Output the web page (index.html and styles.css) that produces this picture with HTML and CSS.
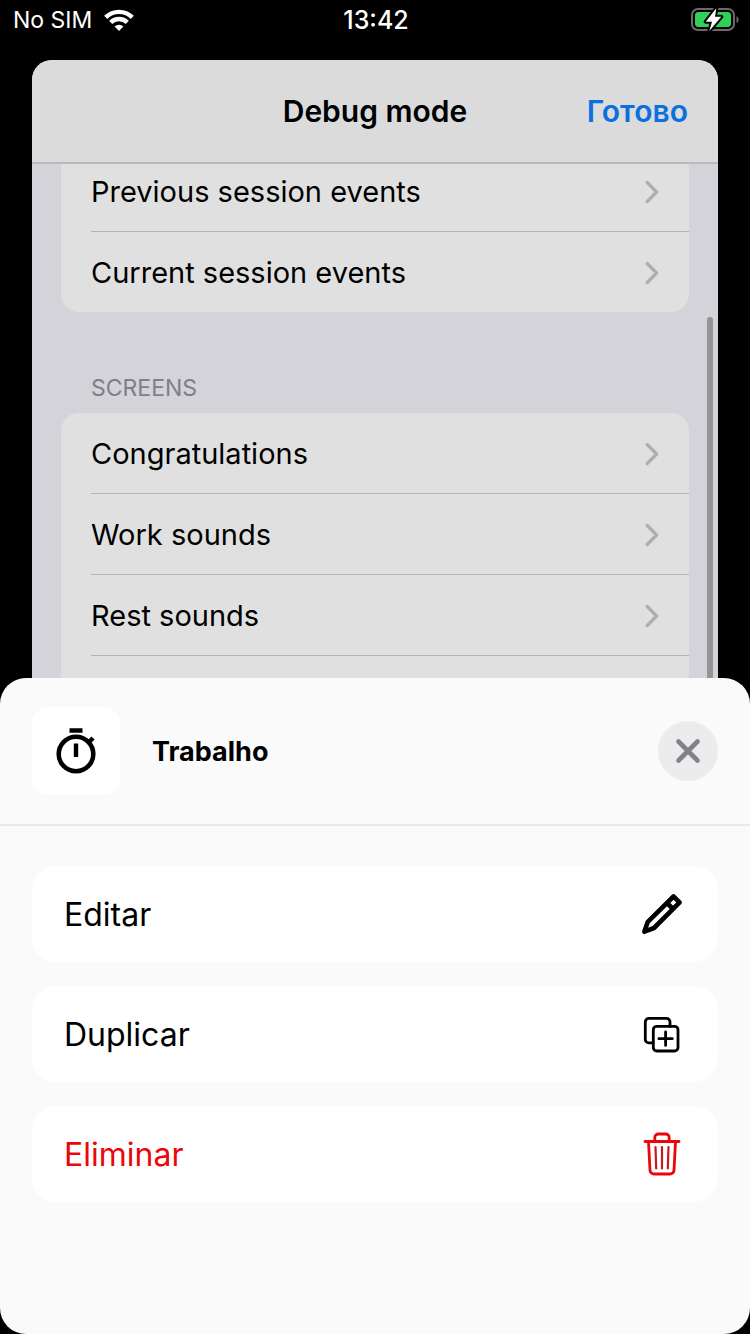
FILE: index.html
```html
<!DOCTYPE html>
<html lang="pt">
<head>
<meta charset="utf-8">
<meta name="viewport" content="width=device-width, initial-scale=1">
<title>Debug mode</title>
<link rel="stylesheet" href="styles.css">
</head>
<body>
<svg class="defs" aria-hidden="true">
  <symbol id="chevron" viewBox="0 0 14 24"><path d="M2.2 2.5 11.6 12 2.2 21.5" fill="none" stroke="currentColor" stroke-width="3.2" stroke-linecap="round" stroke-linejoin="round"/></symbol>
</svg>
<div class="app">
  <header class="status">
    <div class="carrier">
      <span>No SIM</span>
      <svg class="wifi" viewBox="0 0 30 22" aria-hidden="true">
        <g fill="none" stroke="#fff" stroke-width="4.4">
          <path d="M1.7 8.4a18.8 18.8 0 0 1 26.6 0"/>
          <path d="M6.7 13.4a11.7 11.7 0 0 1 16.6 0"/>
        </g>
        <path d="M15 22l-4.4-4.5a6.3 6.3 0 0 1 8.8 0z" fill="#fff"/>
      </svg>
    </div>
    <time class="clock">13:42</time>
    <svg class="battery" viewBox="0 0 48 24" aria-hidden="true">
      <rect x="1" y="1" width="42" height="21" rx="6" fill="none" stroke="#6a6a6c" stroke-width="2"/>
      <path d="M45.500 8q2.200 1 2.200 3.500t-2.200 3.500z" fill="#6a6a6c"/>
      <rect x="4" y="4" width="36" height="15" rx="3.500" fill="#30d158"/>
      <path d="M25.300.3 14.700 13.700h6.300L18.300 23 30.300 8.700H24z" fill="#fff" stroke="#000" stroke-width="4" stroke-linejoin="round" paint-order="stroke"/>
    </svg>
  </header>

  <main class="panel">
    <div class="panel-head">
      <h1 class="panel-title">Debug mode</h1>
      <button class="done" type="button">Готово</button>
    </div>
    <div class="scroller">
      <div class="content">
        <div class="card">
          <button class="row" type="button"><span class="row-body">Previous session events<svg class="chevron"><use href="#chevron"/></svg></span></button>
          <button class="row" type="button"><span class="row-body">Current session events<svg class="chevron"><use href="#chevron"/></svg></span></button>
        </div>
        <h2 class="section">SCREENS</h2>
        <div class="card">
          <button class="row" type="button"><span class="row-body">Congratulations<svg class="chevron"><use href="#chevron"/></svg></span></button>
          <button class="row" type="button"><span class="row-body">Work sounds<svg class="chevron"><use href="#chevron"/></svg></span></button>
          <button class="row" type="button"><span class="row-body">Rest sounds<svg class="chevron"><use href="#chevron"/></svg></span></button>
          <div class="row"></div>
        </div>
      </div>
      <div class="scrollbar"></div>
    </div>
  </main>

  <section class="sheet" aria-labelledby="sheet-title">
    <div class="sheet-head">
      <div class="tile">
        <svg class="stopwatch" viewBox="0 0 40 48" aria-hidden="true">
          <circle cx="20" cy="27" r="17.300" fill="none" stroke="#000" stroke-width="4.600"/>
          <path d="M13.500 1.300h13v4.400h-13zM17.800 16.500h4.400v13.500h-4.400z"/>
          <path d="M31.500 16.500l5.500-5.500" stroke="#000" stroke-width="4.400"/>
        </svg>
      </div>
      <h2 class="sheet-title" id="sheet-title">Trabalho</h2>
      <button class="close" type="button" aria-label="Fechar">
        <svg class="cross" viewBox="0 0 26 26" aria-hidden="true"><path d="M3.500 3.500l19 19m0-19l-19 19" fill="none" stroke="#838387" stroke-width="4.600" stroke-linecap="round"/></svg>
      </button>
    </div>
    <div class="actions">
      <button class="action" type="button">Editar
        <svg class="icon" viewBox="0 0 44 44" aria-hidden="true">
          <g fill="none" stroke="#000" stroke-width="4.600" stroke-linejoin="round">
            <path d="M4.400 39.600 7.800 29.800 33.500 4.500 39.600 10.400 14 36z"/>
            <path d="M27 11l6.200 6"/>
          </g>
        </svg>
      </button>
      <button class="action" type="button">Duplicar
        <svg class="icon" viewBox="0 0 44 44" aria-hidden="true">
          <g fill="none" stroke="#000" stroke-width="2.800" stroke-linecap="round" stroke-linejoin="round">
            <rect x="13.300" y="14.300" width="24.700" height="24.700" rx="3.500"/>
            <path d="M13.300 30.900H8.800a3.500 3.500 0 0 1-3.500-3.500V9.900a3.500 3.500 0 0 1 3.500-3.500h17.700a3.500 3.500 0 0 1 3.500 3.500v4.400M25.600 20v13.400M18.900 26.700h13.400"/>
          </g>
        </svg>
      </button>
      <button class="action danger" type="button">Eliminar
        <svg class="icon" viewBox="0 0 44 44" aria-hidden="true">
          <g fill="none" stroke="#ec0609" stroke-linecap="round" stroke-linejoin="round">
            <path stroke-width="2.800" d="M5 9.500h34M14.800 9V5.500A3.500 3.500 0 0 1 18.300 2h7.400a3.500 3.500 0 0 1 3.500 3.500V9M8.500 10l1.500 28.300a4 4 0 0 0 4 3.700h16a4 4 0 0 0 4-3.700L35.500 10"/>
            <path stroke="#c41b20" stroke-width="2.200" d="M15.500 15l.7 21.500M22 15v21.500M28.500 15l-.7 21.500"/>
          </g>
        </svg>
      </button>
    </div>
  </section>
</div>
</body>
</html>
```
FILE: styles.css
```css
* { box-sizing: border-box; }

body {
  margin: 0;
  background: #000;
  color: #000;
  font-family: Inter, "Liberation Sans", sans-serif;
}

button {
  border: 0;
  background: none;
  color: inherit;
  font: inherit;
  text-align: left;
  cursor: pointer;
}

h1, h2 { margin: 0; }

.defs { display: none; }

.app {
  display: flex;
  flex-direction: column;
  height: 100vh;
}

/* Status bar */
.status {
  display: grid;
  grid-template-columns: 1fr auto 1fr;
  align-items: center;
  flex: none;
  height: 40px;
  padding: 0 11px 0 13px;
  color: #fff;
  font-size: 23px;
}

.carrier { display: flex; align-items: center; gap: 12px; }
.wifi { width: 30px; height: 22px; }
.clock { font-size: 25px; font-weight: 500; }
.battery { width: 48px; height: 24px; justify-self: end; }

/* Dimmed panel */
.panel {
  display: flex;
  flex-direction: column;
  flex: 1;
  min-height: 0;
  margin: 20px 32px 0;
  border-radius: 20px 20px 0 0;
  background: #d4d3d9;
  overflow: hidden;
}

.panel-head {
  display: grid;
  grid-template-columns: 1fr auto 1fr;
  align-items: center;
  flex: none;
  height: 104px;
  padding: 0 30px;
  border-bottom: 2px solid #b9b9bd;
  background: #dbdbdc;
  font-size: 30px;
}

.panel-title { grid-column: 2; font-size: 30px; font-weight: 600; }

.done {
  justify-self: end;
  padding: 0;
  color: #0a6fdf;
  font-weight: 600;
}

.scroller { position: relative; flex: 1; min-height: 0; overflow: hidden; }
.content { margin-top: -13px; padding: 0 29px; }

.card { border-radius: 18px; background: #e0e0e0; overflow: hidden; }

.row {
  display: block;
  width: 100%;
  padding: 0 0 0 30px;
  font-size: 29px;
}

.row-body {
  display: flex;
  align-items: center;
  justify-content: space-between;
  height: 81px;
  padding: 1px 30px 0 0;
  border-bottom: 1px solid #b4b4b6;
}

.row:last-child .row-body { height: 80px; border-bottom: 0; }
div.row { height: 81px; }

.chevron { width: 14px; height: 24px; color: #aeaeb0; }

.section {
  padding: 61px 30px 10px;
  color: #7f7f84;
  font-size: 23px;
  font-weight: 400;
  line-height: 30px;
}

.scrollbar {
  position: absolute;
  top: 153px;
  right: 5px;
  bottom: 0;
  width: 6px;
  border-radius: 3px 3px 0 0;
  background: #949496;
}

/* Bottom sheet */
.sheet {
  flex: none;
  padding-bottom: 132px;
  border-radius: 26px;
  background: #fafafa;
}

.sheet-head {
  display: flex;
  align-items: center;
  height: 148px;
  padding: 0 32px;
  border-bottom: 2px solid #e9e9ea;
}

.tile {
  display: grid;
  place-items: center;
  width: 88px;
  height: 88px;
  border-radius: 16px;
  background: #fff;
}

.stopwatch { width: 40px; height: 48px; }

.sheet-title { flex: 1; margin-left: 32px; font-size: 27px; font-weight: 700; }

.close {
  display: grid;
  place-items: center;
  width: 60px;
  height: 60px;
  padding: 0;
  border-radius: 50%;
  background: #ececee;
}

.cross { width: 26px; height: 26px; }

.actions {
  display: flex;
  flex-direction: column;
  gap: 24px;
  padding: 40px 32px 0;
}

.action {
  display: flex;
  align-items: center;
  justify-content: space-between;
  height: 96px;
  padding: 0 34px 0 32px;
  border-radius: 24px;
  background: #fff;
  font-size: 32px;
}

.icon { width: 44px; height: 44px; }
.danger { color: #ec0609; }
```
